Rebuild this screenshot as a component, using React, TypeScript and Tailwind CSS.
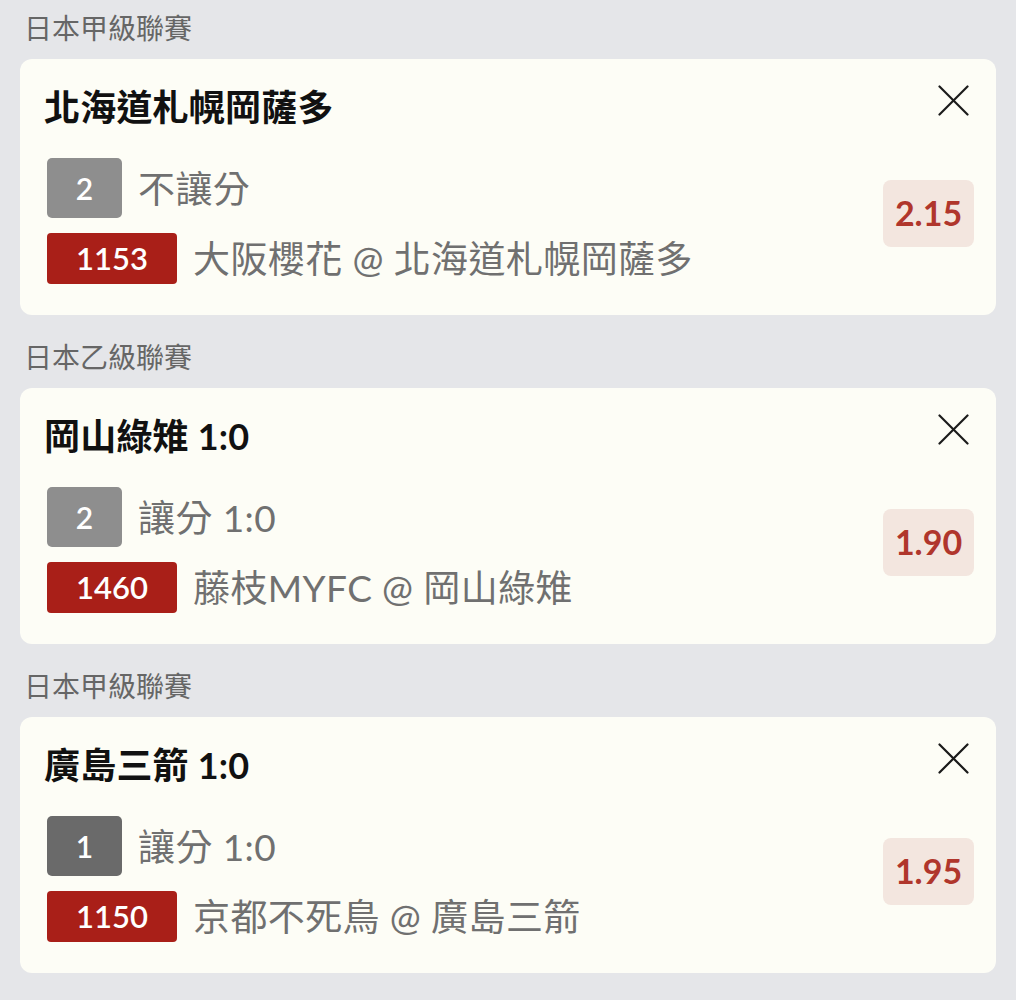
import React from 'react';

type Bet = {
  league: string;
  title: string;
  pick: string;
  pickTone: 'light' | 'dark';
  market: string;
  code: string;
  match: string;
  odds: string;
};

const bets: Bet[] = [
  {
    league: '日本甲級聯賽',
    title: '北海道札幌岡薩多',
    pick: '2',
    pickTone: 'light',
    market: '不讓分',
    code: '1153',
    match: '大阪櫻花 @ 北海道札幌岡薩多',
    odds: '2.15',
  },
  {
    league: '日本乙級聯賽',
    title: '岡山綠雉 1:0',
    pick: '2',
    pickTone: 'light',
    market: '讓分 1:0',
    code: '1460',
    match: '藤枝MYFC @ 岡山綠雉',
    odds: '1.90',
  },
  {
    league: '日本甲級聯賽',
    title: '廣島三箭 1:0',
    pick: '1',
    pickTone: 'dark',
    market: '讓分 1:0',
    code: '1150',
    match: '京都不死鳥 @ 廣島三箭',
    odds: '1.95',
  },
];

const font = "font-['Lato','Noto_Sans_CJK_TC',sans-serif]";

function CloseIcon() {
  return (
    <svg width="31" height="31" viewBox="0 0 31 31" fill="none" stroke="#1a1a1a" strokeWidth="2.2" strokeLinecap="round">
      <path d="M1.5 1.5 L29.5 29.5" />
      <path d="M29.5 1.5 L1.5 29.5" />
    </svg>
  );
}

function BetCard({ bet }: { bet: Bet }) {
  return (
    <div className="rounded-xl bg-[#fdfdf6] pl-6 pr-[22px] pt-[26px] pb-[27px] flex">
      <div className="flex-1 min-w-0">
        <h2 className="text-[36px] leading-[44px] font-bold text-[#111] tracking-[0.2px]">{bet.title}</h2>
        <div className="mt-[29px] ml-[3px] flex flex-col gap-[10px]">
          <div className="h-[60px] flex items-center gap-4">
            <span
              className={
                'w-[75px] h-[60px] rounded-[5px] flex items-center justify-center text-white text-[30px] font-semibold ' +
                (bet.pickTone === 'dark' ? 'bg-[#6a6a6a]' : 'bg-[#8e8e8e]')
              }
            >
              {bet.pick}
            </span>
            <span className="text-[37px] leading-none text-[#707070] tracking-[0.4px]">{bet.market}</span>
          </div>
          <div className="h-[60px] flex items-center gap-4">
            <span className="w-[130px] h-[51px] rounded-[4px] bg-[#a91f18] flex items-center justify-center text-white text-[31px] font-semibold">
              {bet.code}
            </span>
            <span className="text-[37px] leading-none text-[#707070] tracking-[0.4px]">{bet.match}</span>
          </div>
        </div>
      </div>
      <div className="flex flex-col items-end">
        <div className="mr-[5px]">
          <CloseIcon />
        </div>
        <div className="mt-[64px] w-[91px] h-[67px] rounded-lg bg-[#f3e6df] flex items-center justify-center pb-[3px] text-[34px] font-bold text-[#b0362c]">
          {bet.odds}
        </div>
      </div>
    </div>
  );
}

export default function App() {
  return (
    <div className={`${font} min-h-[1000px] bg-[#e5e6e9] px-5 pt-[10px] pb-7`}>
      {bets.map((bet, i) => (
        <section key={i} className={i > 0 ? 'mt-[24px]' : ''}>
          <div className="pl-1 text-[28px] leading-[36px] text-[#666] mb-[13px]">{bet.league}</div>
          <BetCard bet={bet} />
        </section>
      ))}
    </div>
  );
}
